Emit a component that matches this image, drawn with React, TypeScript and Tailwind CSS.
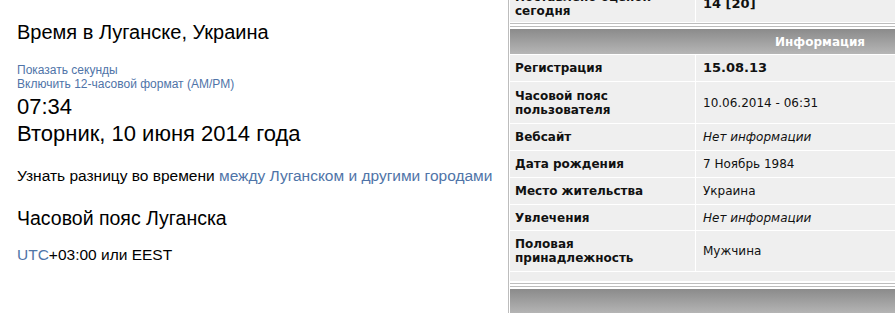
const LINK = 'text-[#4f74a8]';

interface InfoRow {
  label: string[];
  value: string;
  italic?: boolean;
  bold?: boolean;
  h: string;
}

const ROWS: InfoRow[] = [
  { label: ['Регистрация'], value: '15.08.13', bold: true, h: 'h-[26px]' },
  { label: ['Часовой пояс', 'пользователя'], value: '10.06.2014 - 06:31', h: 'h-[41px]' },
  { label: ['Вебсайт'], value: 'Нет информации', italic: true, h: 'h-[26px]' },
  { label: ['Дата рождения'], value: '7 Ноябрь 1984', h: 'h-[26px]' },
  { label: ['Место жительства'], value: 'Украина', h: 'h-[26px]' },
  { label: ['Увлечения'], value: 'Нет информации', italic: true, h: 'h-[25px]' },
  { label: ['Половая', 'принадлежность'], value: 'Мужчина', h: 'h-[40px]' },
];

function Row({ row }: { row: InfoRow }) {
  return (
    <div className={`flex gap-px ${row.h}`}>
      <div className="w-[185px] shrink-0 bg-[#efefef] flex flex-col justify-center pl-[5px] font-bold text-[12px] leading-[14px]">
        {row.label.map((l) => (
          <span key={l}>{l}</span>
        ))}
      </div>
      <div
        className={`flex-1 bg-[#efefef] flex items-center pl-[7px] text-[12px] ${
          row.italic ? 'italic' : ''
        } ${row.bold ? 'font-bold text-[13px]' : ''}`}
      >
        {row.value}
      </div>
    </div>
  );
}

function Header({ title }: { title?: string }) {
  return (
    <div className="h-[25px] bg-gradient-to-b from-[#8b8b8b] to-[#b6b6b6] flex items-center pl-[265px] text-white font-bold text-[12px]">
      {title}
    </div>
  );
}

export default function App() {
  return (
    <div className="flex w-[895px] h-[313px] overflow-hidden bg-white text-black">
      {/* Left: time in Lugansk */}
      <div className="w-[508px] shrink-0 pl-[17px] font-['Liberation_Sans',Arial,sans-serif]">
        <h1 className="mt-[21px] text-[20px] leading-[22px]">Время в Луганске, Украина</h1>
        <div className={`mt-[20px] text-[12px] leading-[14px] ${LINK}`}>
          <div>Показать секунды</div>
          <div>Включить 12-часовой формат (AM/PM)</div>
        </div>
        <div className="text-[22px] leading-[27px] mt-[2px]">
          <div>07:34</div>
          <div>Вторник, 10 июня 2014 года</div>
        </div>
        <p className="mt-[20px] text-[15.5px] leading-[18px]">
          Узнать разницу во времени <span className={LINK}>между Луганском и другими городами</span>
        </p>
        <h2 className="mt-[22px] text-[19.5px] leading-[22px]">Часовой пояс Луганска</h2>
        <p className="mt-[17px] text-[15.5px] leading-[18px]">
          <span className={LINK}>UTC</span>+03:00 или EEST
        </p>
      </div>

      {/* Right: profile info */}
      <div className="flex-1 min-w-0 border-l border-[#bdbdbd] pl-px font-['DejaVu_Sans',Verdana,sans-serif] text-[#111]">
        <div className="-mt-[14px] border-b border-[#bdbdbd] pb-px">
          <div className="flex gap-px h-[36px]">
            <div className="w-[185px] shrink-0 bg-[#efefef] flex flex-col justify-center pl-[5px] font-bold text-[12px] leading-[14px]">
              <span>Поставлено оценок</span>
              <span>сегодня</span>
            </div>
            <div className="flex-1 bg-[#efefef] flex items-center pl-[7px] font-bold text-[13px]">14 [20]</div>
          </div>
        </div>
        <div className="mt-[2px] border-y border-[#bdbdbd] py-[2px] flex flex-col gap-px">
          <Header title="Информация" />
          {ROWS.map((r) => (
            <Row key={r.label.join(' ')} row={r} />
          ))}
          <div className="h-[9px] bg-[#eeeeee]" />
        </div>
        <div className="mt-[2px] border-t border-[#bdbdbd] pt-[2px]">
          <Header />
        </div>
      </div>
    </div>
  );
}
